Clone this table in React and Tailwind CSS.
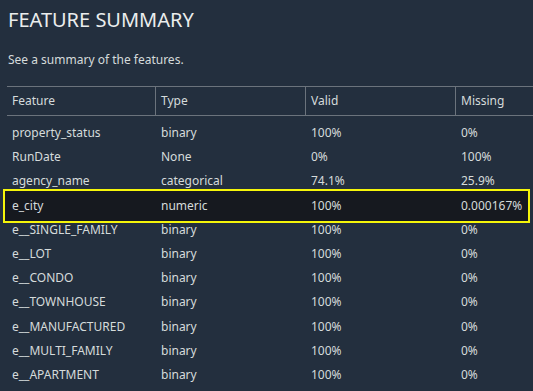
import React from "react";

const rows = [
  ["property_status", "binary", "100%", "0%"],
  ["RunDate", "None", "0%", "100%"],
  ["agency_name", "categorical", "74.1%", "25.9%"],
  ["e_city", "numeric", "100%", "0.000167%", true],
  ["e__SINGLE_FAMILY", "binary", "100%", "0%"],
  ["e__LOT", "binary", "100%", "0%"],
  ["e__CONDO", "binary", "100%", "0%"],
  ["e__TOWNHOUSE", "binary", "100%", "0%"],
  ["e__MANUFACTURED", "binary", "100%", "0%"],
  ["e__MULTI_FAMILY", "binary", "100%", "0%"],
  ["e__APARTMENT", "binary", "100%", "0%"],
];

const headers = ["Feature", "Type", "Valid", "Missing"];

function App() {
  return (
    <div
      className="w-[533px] h-[391px] overflow-hidden bg-[#232f3e] text-[#d5dbdb]"
      style={{ fontFamily: '"Noto Sans", "Open Sans", sans-serif' }}
    >
      <h1 className="pl-2 pt-[6px] text-[20px] leading-[28px] text-[#eaeded]">
        FEATURE SUMMARY
      </h1>
      <p className="pl-2 mt-[18px] text-[12px] leading-[16px]">
        See a summary of the features.
      </p>
      <div className="ml-[7px] mt-[18px]">
        {/* header */}
        <div className="grid grid-cols-[149px_150px_150px_150px] border-y border-[#6b737c] h-[30px]">
          {headers.map((h, i) => (
            <div
              key={h}
              className={
                i < 3
                  ? "flex items-center pl-[5px] text-[12px] border-r border-[#6b737c]"
                  : "flex items-center pl-[5px] text-[12px]"
              }
            >
              {h}
            </div>
          ))}
        </div>
        <div className="pt-[5px] flex flex-col">
          {rows.map(([name, type, valid, missing, hl]) => (
            <div
              key={name}
              className="relative grid grid-cols-[149px_150px_150px_150px] h-[24.2px] text-[12px] items-center"
            >
              {hl && (
                <span className="absolute left-[-4px] w-[527px] top-[-5px] bottom-[-5px] bg-[#16191f] border-2 border-[#f5f50a]" />
              )}
              <span className="relative pl-[5px]">{name}</span>
              <span className="relative pl-[5px]">{type}</span>
              <span className="relative pl-[5px]">{valid}</span>
              <span className="relative pl-[5px]">{missing}</span>
            </div>
          ))}
        </div>
      </div>
    </div>
  );
}

export default App;
